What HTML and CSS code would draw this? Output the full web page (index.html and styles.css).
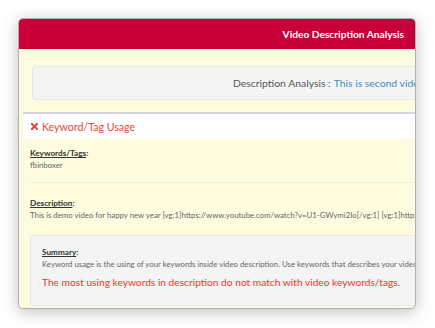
FILE: index.html
```html
<!DOCTYPE html>
<html>
<head>
<meta charset="utf-8">
<link rel="stylesheet" href="styles.css">
</head>
<body>
<div class="modal">
  <div class="modal-header">Video Description Analysis</div>
  <div class="modal-body">
    <div class="well">Description Analysis : <span class="link">This is second video for happy new year</span></div>
    <div class="panel">
      <div class="panel-head">
        <svg class="x-icon" width="7" height="7" viewBox="0 0 8 8"><path d="M1 1 L7 7 M7 1 L1 7" stroke="#dd4b39" stroke-width="2.4" stroke-linecap="square"/></svg>
        <span>Keyword/Tag Usage</span>
      </div>
      <div class="panel-body">
        <div class="label"><u>Keywords/Tags</u>:</div>
        <div class="value">fbinboxer</div>
        <hr class="sep">
        <div class="label"><u>Description</u>:</div>
        <div class="value">This is demo video for happy new year [vg:1]https://www.youtube.com/watch?v=U1-GWymi2Io[/vg:1] [vg:1]https://www.youtube.com/watch?v=U1-GWymi2Io[/vg:1]</div>
        <div class="summary">
          <div class="label"><u>Summary</u>:</div>
          <div class="value">Keyword usage is the using of your keywords inside video description. Use keywords that describes your video content properly.</div>
          <div class="warn">The most using keywords in description do not match with video keywords/tags.</div>
        </div>
      </div>
    </div>
  </div>
</div>
</body>
</html>
```
FILE: styles.css
```css
html, body {
  margin: 0;
  background: #ffffff;
}
body {
  padding: 18px;
  font-family: Lato, "Liberation Sans", sans-serif;
}
.modal {
  width: 396px;
  height: 289px;
  border: 1px solid #b0b0b0;
  border-radius: 5px;
  overflow: hidden;
  background: #fefcde;
  box-shadow: 0 3px 16px rgba(0, 0, 0, 0.25);
}
.modal-header {
  height: 30px;
  background: #c8003a;
  color: #ffffff;
  display: flex;
  align-items: center;
  justify-content: flex-end;
  padding-right: 11px;
  font-size: 10.2px;
  font-weight: 700;
}
.modal-body {
  padding-top: 17px;
  white-space: nowrap;
}
.well {
  margin-left: 13px;
  width: 520px;
  height: 34px;
  box-sizing: border-box;
  background: #f4f4f4;
  border: 1px solid #e6e6e2;
  border-radius: 3px;
  display: flex;
  align-items: center;
  padding-left: 200px;
  font-size: 10.4px;
  color: #555555;
}
.well .link {
  color: #3c8dbc;
  margin-left: 3px;
}
.panel {
  margin-top: 12px;
  margin-left: 4px;
  width: 520px;
  border-top: 2px solid #d2d6de;
}
.panel-head {
  background: #ffffff;
  height: 25px;
  display: flex;
  align-items: center;
  gap: 4px;
  padding-left: 8px;
  color: #dd4b39;
  font-size: 10.6px;
}
.panel-body {
  padding: 8px 7px;
}
.label {
  font-size: 8.2px;
  font-weight: 700;
  color: #333333;
  line-height: 12px;
}
.label u {
  text-decoration-thickness: 1px;
}
.value {
  font-size: 7.8px;
  color: #666666;
  line-height: 12px;
}
.sep {
  border: 0;
  border-top: 1px solid #f0eedc;
  margin: 11px 0 14px 0;
}
.summary {
  margin-top: 14px;
  background: #f4f4f4;
  border: 1px solid #e8e8e4;
  border-radius: 3px;
  height: 71px;
  box-sizing: border-box;
  padding: 10px 11px;
}
.warn {
  margin-top: 5px;
  color: #ff2f2f;
  font-size: 10.2px;
  line-height: 14px;
}
```
